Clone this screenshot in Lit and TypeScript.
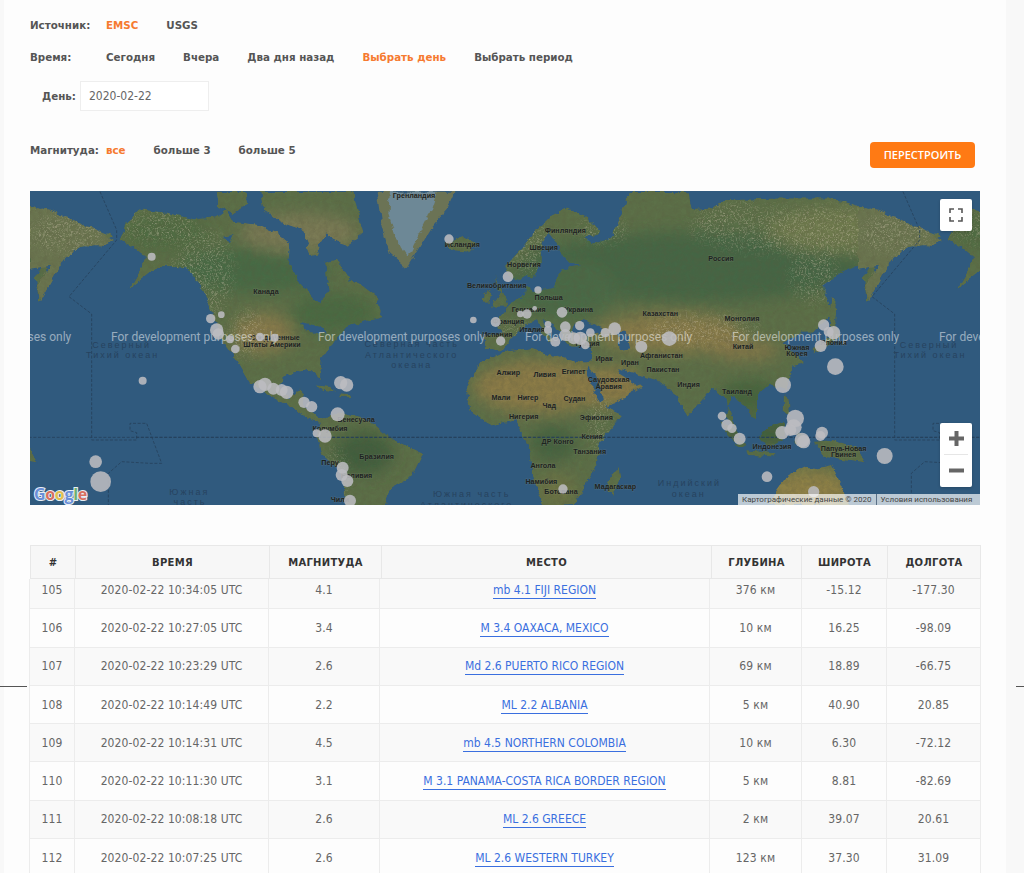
import { LitElement, css, html, svg } from 'lit'
import { customElement } from 'lit/decorators.js'

// all map data is written in "zoom units": 3 units = 1px, x measured from the page's left edge
const WRAP = 2484 // one world is 828px wide
const EAST = 1536 // eastern hemisphere points were measured with this x offset

const shift = (pts: string, dx: number) =>
  pts.trim().split(/\s+/).map((p) => {
    const [x, y] = p.split(',').map(Number)
    return `${x + dx},${y}`
  }).join(' ')

const LAND_WEST = [
  // north america
  '362,150 375,105 420,58 500,68 580,88 650,82 680,60 700,95 780,105 830,130 870,160 865,215 900,280 960,345 985,300 975,215 1010,205 1050,270 1085,285 1130,320 1148,382 1090,395 1040,410 1000,455 965,510 960,568 930,540 880,548 850,560 842,595 870,625 900,598 912,610 905,640 950,680 975,682 1020,668 1110,690 1170,745 1270,790 1235,860 1175,895 1155,945 1040,950 1025,850 962,790 950,735 965,700 935,690 880,655 800,612 745,575 705,505 660,440 640,380 610,300 560,232 470,232 385,300 440,205 395,170',
  // canadian arctic islands
  '650,5 740,5 745,40 700,70 655,50',
  '780,5 1060,5 1090,130 1040,170 980,130 940,190 910,120 850,100 790,60',
  '920,170 950,160 960,190 930,195',
  // iceland
  '1335,160 1390,140 1440,165 1400,185 1350,180',
  // cuba, haiti
  '940,585 990,590 1010,605 970,600',
  '1015,610 1055,612 1050,622 1020,622',
]

const LAND_EAST = [
  // eurasia
  '-81,475 -81,435 -26,430 -41,415 -41,385 -1,340 39,315 44,290 64,305 124,295 144,250 154,235 214,225 174,218 154,200 134,160 109,130 89,160 89,220 64,265 44,255 24,270 -11,260 -21,230 24,180 64,130 114,80 164,55 224,80 264,125 224,145 240,165 300,140 340,40 350,5 530,5 540,60 600,55 640,30 800,25 960,25 1100,70 1285,140 1240,165 1160,175 1095,210 1065,330 1055,265 1080,215 1000,240 930,290 965,370 905,425 870,425 815,460 880,520 840,530 825,600 770,585 735,615 735,690 690,640 660,615 640,680 672,720 640,625 600,595 530,680 480,600 430,570 330,538 390,590 285,650 245,610 222,520 240,510 240,470 174,470 159,450 124,405 89,390 124,455 109,455 74,390 39,405 -1,445 -26,480 -66,475',
  // britain, ireland
  '-51,255 -16,330 -11,350 -61,350 -36,310',
  '-86,310 -61,300 -66,335 -88,335',
  // japan
  '960,320 975,340 970,395 985,440 945,470 905,490 905,475 950,440 955,390',
  // africa
  '-138,590 -90,515 -66,505 -26,485 54,475 134,500 214,520 234,520 250,600 285,655 330,675 265,755 250,830 185,945 95,950 60,850 50,770 10,690 -60,710 -125,665',
  // madagascar
  '285,880 320,830 325,860 300,920',
  // sumatra, borneo, sulawesi, new guinea, java
  '625,690 665,715 700,770 680,770 640,725',
  '740,740 770,710 815,695 820,745 770,775',
  '860,725 880,740 870,775 850,760',
  '905,755 960,750 1040,775 1060,820 990,810 935,800',
  '705,780 790,790 790,800 710,795',
  // philippines
  '815,615 830,625 835,680 815,665',
  // australia
  '765,945 830,855 880,830 920,835 960,825 985,880 1010,945',
  // sakhalin
  '1060,280 1070,270 1075,330 1062,335',
]

// chukotka/kamchatka east of the wrap line, seen at the far left of the map
const LAND_FAR = [
  '90,60 130,55 200,80 290,120 340,150 300,170 240,165 190,210 120,335 110,280 150,230 90,240',
]

const WATER = [
  // black sea, caspian, red sea, persian gulf
  '184,400 214,390 274,415 264,430 214,440 179,425',
  '314,425 344,425 354,475 324,480',
  '222,530 240,540 280,630 265,640 235,580',
  '325,535 385,575 375,585 320,550',
]
const WATER_WEST = [
  // great lakes
  '900,395 960,410 985,430 950,430 915,420',
  '672,140 700,135 690,160',
]

// [x, y, r], western measurements first
const PINS_WEST = [
  [455, 200, 12], [428, 572, 12], [632, 386, 14], [664, 374, 10], [650, 420, 20], [655, 432, 17],
  [690, 448, 12], [706, 477, 13], [780, 441, 13], [824, 443, 12], [780, 590, 20], [795, 583, 20],
  [820, 596, 18], [845, 600, 18], [860, 607, 20], [1022, 578, 20], [1040, 585, 20], [912, 637, 17], [935, 650, 17],
  [1013, 673, 21], [950, 730, 12], [975, 738, 20], [1028, 833, 18], [1025, 855, 18], [1042, 873, 18],
  [1050, 932, 18], [287, 815, 19], [302, 875, 31], [1347, 147, 14], [1420, 390, 10], [1487, 396, 15],
  [1502, 453, 14], [1524, 260, 16],
]
const PINS_EAST = [
  [78, 300, 11], [150, 367, 16], [45, 372, 14], [25, 372, 10], [68, 355, 7], [108, 403, 10], [108, 420, 12],
  [160, 410, 16], [203, 407, 14], [235, 428, 13], [280, 428, 14], [308, 416, 19], [130, 455, 15], [160, 435, 18],
  [185, 445, 18], [205, 445, 20], [220, 465, 13], [388, 470, 18], [472, 446, 22], [935, 405, 17], [965, 428, 20],
  [950, 425, 15], [926, 468, 18], [970, 530, 25], [813, 585, 24], [850, 685, 26], [845, 712, 24], [810, 728, 20],
  [835, 720, 18], [870, 750, 22], [875, 755, 20], [930, 728, 18], [925, 738, 15], [630, 678, 13], [645, 705, 17],
  [660, 715, 14], [683, 746, 18], [765, 860, 16], [1118, 798, 24], [905, 905, 17], [153, 897, 14],
]

const LABELS_WEST: [string, number, number][] = [
  ['Гренландия', 1242, 25], ['Исландия', 1387, 172], ['Канада', 798, 311], ['Соединенные', 825, 449],
  ['Штаты Америки', 816, 470], ['Великобритания', 1490, 294], ['Венесуэла', 1068, 696], ['Колумбия', 990, 724],
  ['Бразилия', 1130, 807], ['Перу', 990, 825], ['Боливия', 1070, 864], ['Чили', 1020, 937], ['Алжир', 1525, 554],
  ['Мали', 1503, 630], ['Испания', 1492, 440], ['Франция', 1525, 401],
]
const LABELS_EAST: [string, number, number][] = [
  ['Финляндия', 160, 129], ['Швеция', 95, 179], ['Норвегия', 36, 231], ['Польша', 110, 330], ['Германия', 50, 367],
  ['Украина', 200, 365], ['Италия', 60, 425], ['Казахстан', 445, 379], ['Монголия', 690, 393], ['Россия', 627, 214],
  ['Китай', 693, 478], ['Южная', 855, 479], ['Корея', 855, 498], ['Япония', 965, 465], ['Турция', 225, 467],
  ['Ирак', 276, 514], ['Иран', 354, 526], ['Афганистан', 448, 504], ['Пакистан', 453, 547], ['Индия', 530, 592],
  ['Таиланд', 675, 613], ['Ливия', 98, 561], ['Египет', 185, 552], ['Саудовская', 290, 575], ['Аравия', 290, 597],
  ['Нигер', 48, 629], ['Судан', 187, 634], ['Чад', 112, 655], ['Нигерия', 35, 686], ['Эфиопия', 253, 691],
  ['Кения', 240, 748], ['ДР Конго', 137, 762], ['Танзания', 233, 793], ['Ангола', 93, 835], ['Намибия', 88, 882],
  ['Ботсвана', 147, 911], ['Мадагаскар', 310, 896], ['Индонезия', 780, 778], ['Папуа-Новая', 995, 782], ['Гвинея', 995, 802],
]
const OCEANS: [string, number, number][] = [
  ['Северный', 365, 474], ['Тихий океан', 368, 504],
  ['Северная часть', 1235, 472], ['Атлантического', 1235, 504], ['океана', 1235, 535],
  ['Южная', 568, 914], ['часть', 570, 944], ['Южная часть', 1415, 922], ['Атлантического', 1400, 954],
  ['Индийский', 2068, 889], ['океан', 2066, 920],
]

// textured relief, [cx, cy, rx, ry]
const RELIEF = [
  [610, 250, 90, 130], [480, 110, 110, 50], [740, 430, 50, 70], [1010, 860, 30, 90],
  [2400, 120, 330, 70], [2200, 100, 120, 60], [2110, 420, 170, 45], [1590, 170, 60, 80],
  [2640, 160, 130, 50], [200, 130, 110, 60], [1810, 120, 70, 40], [2440, 250, 70, 90],
  [1550, 420, 60, 20], [1800, 700, 30, 90],
]

const polys = (list: string[], dx: number, fill: string) =>
  list.map((p) => svg`<polygon points=${shift(p, dx)} fill=${fill}></polygon>`)

const labelRun = (list: [string, number, number][], dx: number) =>
  list.map(([t, x, y]) => svg`<text class="country" x=${x + dx} y=${y}>${t}</text>`)

const dateLine = svg`
  <polyline class="border" points="300,5 350,120 350,150 207,320 275,372 275,750 410,750 410,728 390,722 390,700 440,700 485,820 450,820 365,815 325,850 325,945"></polyline>
  <line class="border" x1="-2000" y1="742" x2="3200" y2="742"></line>
`

const landShapes = svg`
  ${polys(LAND_WEST, 0, '#5c7048')}
  ${polys(LAND_EAST, EAST, '#5c7048')}
  ${polys(LAND_FAR, 0, '#6b7650')}
`

const biomes = svg`
  <g filter="url(#soft)">
    <!-- boreal belts -->
    <ellipse cx="760" cy="240" rx="230" ry="70" fill="#476a45"></ellipse>
    <ellipse cx="500" cy="130" rx="130" ry="55" fill="#4f6c42"></ellipse>
    <ellipse cx="2080" cy="230" rx="520" ry="105" fill="#456644"></ellipse>
    <ellipse cx="1680" cy="300" rx="170" ry="90" fill="#486a46"></ellipse>
    <ellipse cx="2560" cy="120" rx="260" ry="70" fill="#6e7a4e"></ellipse>
    <ellipse cx="1000" cy="370" rx="130" ry="60" fill="#4a6b42"></ellipse>
    <!-- tundra -->
    <ellipse cx="900" cy="130" rx="180" ry="60" fill="#7a7a55"></ellipse>
    <!-- deserts -->
    <ellipse cx="790" cy="430" rx="90" ry="60" fill="#897b4c"></ellipse>
    <ellipse cx="1620" cy="590" rx="200" ry="80" fill="#8c7c46"></ellipse>
    <ellipse cx="1830" cy="590" rx="100" ry="60" fill="#8c7c46"></ellipse>
    <ellipse cx="2010" cy="430" rx="220" ry="60" fill="#897b48"></ellipse>
    <ellipse cx="2230" cy="480" rx="110" ry="30" fill="#85784a"></ellipse>
    <ellipse cx="2430" cy="905" rx="130" ry="70" fill="#8f8146"></ellipse>
    <!-- tropics -->
    <ellipse cx="1090" cy="790" rx="90" ry="65" fill="#3f5f3e"></ellipse>
    <ellipse cx="1660" cy="760" rx="70" ry="55" fill="#44643f"></ellipse>
    <ellipse cx="2250" cy="620" rx="90" ry="50" fill="#45653e"></ellipse>
    <ellipse cx="2310" cy="730" rx="150" ry="40" fill="#3f5f3e"></ellipse>
    <ellipse cx="1670" cy="900" rx="60" ry="50" fill="#6d7445"></ellipse>
  </g>
`

const GREEN_OUT = '1130,5 1365,5 1340,60 1295,110 1220,235 1170,190 1145,110'
const GREEN_ICE = '1170,5 1310,5 1285,80 1225,200 1190,150 1165,70'

const world = svg`
  <g filter="url(#coast)">
    <g clip-path="url(#land)">
      ${landShapes}
      ${biomes}
      <rect x="60" y="0" width="2900" height="945" filter="url(#grain)" opacity=".3"></rect>
      <g filter="url(#rough)" opacity=".42">
        ${RELIEF.map(([cx, cy, rx, ry]) => svg`<ellipse cx=${cx} cy=${cy} rx=${rx} ry=${ry}></ellipse>`)}
      </g>
    </g>
    <polygon points=${GREEN_OUT} fill="#6b7355"></polygon>
    <polygon points=${GREEN_ICE} fill="#6d8896"></polygon>
    ${polys(WATER, EAST, '#305a7e')}
    ${polys(WATER_WEST, 0, '#305a7e')}
  </g>
`

const FS_ICON = svg`<path d="M1 5V1h4M9 1h4v4M13 9v4H9M5 13H1V9" fill="none" stroke="#555" stroke-width="1.6"></path>`

@customElement('quake-map')
export class QuakeMap extends LitElement {
  render() {
    const devX = [-96, 111, 318, 525, 732, 939]
    return html`
      <svg class="canvas" viewBox="90 3 2850 942" width="950" height="314" xmlns="http://www.w3.org/2000/svg">
        <defs>
          <clipPath id="land">
            ${landShapes}
          </clipPath>
          <filter id="soft" x="-30%" y="-30%" width="160%" height="160%"><feGaussianBlur stdDeviation="22"></feGaussianBlur></filter>
          <filter id="grain" x="0" y="0" width="100%" height="100%">
            <feTurbulence type="fractalNoise" baseFrequency=".07" numOctaves="4" seed="4"></feTurbulence>
            <feColorMatrix values="0 0 0 0 .1  0 0 0 0 .1  0 0 0 0 .05  1.8 0 0 0 -.5"></feColorMatrix>
          </filter>
          <filter id="rough" x="-10%" y="-10%" width="120%" height="120%">
            <feGaussianBlur in="SourceGraphic" stdDeviation="16" result="b"></feGaussianBlur>
            <feTurbulence type="fractalNoise" baseFrequency=".2" numOctaves="2" seed="9" result="n"></feTurbulence>
            <feColorMatrix in="n" values="0 0 0 0 .62  0 0 0 0 .56  0 0 0 0 .42  3.2 0 0 0 -1.55" result="sp"></feColorMatrix>
            <feComposite in="sp" in2="b" operator="in"></feComposite>
          </filter>
          <filter id="coast" x="-2%" y="-2%" width="104%" height="104%" color-interpolation-filters="sRGB">
            <feTurbulence type="fractalNoise" baseFrequency=".045" numOctaves="3" seed="2" result="t"></feTurbulence>
            <feDisplacementMap in="SourceGraphic" in2="t" scale="18" xChannelSelector="R" yChannelSelector="G"></feDisplacementMap>
          </filter>
        </defs>
        <rect x="90" y="3" width="2850" height="942" fill="#305a7e"></rect>
        <g transform="translate(${-WRAP},0)">${world}</g>
        ${world}
        <g transform="translate(${WRAP},0)">${world}</g>
        ${dateLine}
        <g transform="translate(${WRAP - 75},0)">${dateLine}</g>
        ${OCEANS.map(([t, x, y]) => svg`<text class="ocean" x=${x} y=${y}>${t}</text>`)}
        <g transform="translate(${WRAP - 62},0)">
          <text class="ocean" x="365" y="474">Северный</text>
          <text class="ocean" x="368" y="504">Тихий океан</text>
        </g>
        ${labelRun(LABELS_WEST, 0)}
        ${labelRun(LABELS_EAST, EAST)}
        ${devX.map((x) => svg`<text class="dev" x=${x * 3} y="453">For development purposes only</text>`)}
        <g class="pins">
          ${PINS_WEST.map(([x, y, r]) => svg`<circle cx=${x} cy=${y} r=${r}></circle>`)}
          ${PINS_EAST.map(([x, y, r]) => svg`<circle cx=${x + EAST} cy=${y} r=${r}></circle>`)}
        </g>
        <text class="google" x="102" y="930" stroke="#e8eef5" stroke-width="6" paint-order="stroke"><tspan fill="#6a8fd8">G</tspan><tspan fill="#d9705f">o</tspan><tspan fill="#e2bf4e">o</tspan><tspan fill="#6a8fd8">g</tspan><tspan fill="#6cb070">l</tspan><tspan fill="#d9705f">e</tspan></text>
      </svg>

      <button class="ctl fullscreen" aria-label="fullscreen">
        <svg width="14" height="14" viewBox="0 0 14 14">${FS_ICON}</svg>
      </button>
      <div class="ctl zoom">
        <span class="zbtn"><svg width="15" height="15" viewBox="0 0 15 15"><path d="M0 7.5h15M7.5 0v15" stroke="#666" stroke-width="4"></path></svg></span>
        <i></i>
        <span class="zbtn"><svg width="15" height="15" viewBox="0 0 15 15"><path d="M0 7.5h15" stroke="#666" stroke-width="4"></path></svg></span>
      </div>
      <div class="attr"><span>Картографические данные © 2020</span><span>Условия использования</span></div>
    `
  }

  static styles = css`
    :host {
      display: block;
      position: relative;
      width: 950px;
      height: 314px;
      overflow: hidden;
      background: #305a7e;
    }
    .canvas {
      display: block;
    }
    .border {
      fill: none;
      stroke: #26405a;
      stroke-width: 2.4;
      stroke-dasharray: 9 5;
    }
    text {
      font-family: 'Liberation Sans', Arial, sans-serif;
    }
    .country {
      font-size: 21.5px;
      font-weight: 700;
      fill: #1d2320;
      text-anchor: middle;
      stroke: rgba(150, 150, 140, 0.25);
      stroke-width: 3px;
      paint-order: stroke;
    }
    .ocean {
      font-size: 27px;
      letter-spacing: 6px;
      fill: #27435f;
      text-anchor: middle;
    }
    .dev {
      font-family: Roboto, sans-serif;
      font-size: 36px;
      fill: rgba(255, 255, 255, 0.5);
    }
    .pins circle {
      fill: #bcbcc0;
      fill-opacity: 0.88;
    }
    .google {
      font-family: 'Open Sans', sans-serif;
      font-size: 48px;
      font-weight: 700;
      letter-spacing: -1px;
    }
    .ctl {
      position: absolute;
      right: 8px;
      background: #fff;
      border: 0;
      padding: 0;
      border-radius: 2px;
      box-shadow: 0 1px 3px rgba(0, 0, 0, 0.2);
    }
    .fullscreen {
      top: 8px;
      width: 32px;
      height: 32px;
      display: flex;
      align-items: center;
      justify-content: center;
    }
    .zoom {
      top: 232px;
      width: 32px;
      height: 64px;
      display: flex;
      flex-direction: column;
    }
    .zbtn {
      height: 31px;
      display: flex;
      align-items: center;
      justify-content: center;
    }
    .zoom i {
      height: 1px;
      margin: 0 4px;
      background: #e6e6e6;
    }
    .attr {
      position: absolute;
      right: 0;
      bottom: 0;
      height: 11px;
      width: 242px;
      display: flex;
      background: rgba(255, 255, 255, 0.68);
      font: 8px/11px Roboto, 'Liberation Sans', sans-serif;
      color: #444;
    }
    .attr span {
      padding: 0 4px;
      white-space: nowrap;
    }
    .attr span + span {
      border-left: 1px solid #5a7087;
    }
  `
}

type Quake = [number, string, string, string, string, string, string]

const QUAKES: Quake[] = [
  [105, '10:34:05', '4.1', 'mb 4.1 FIJI REGION', '376', '-15.12', '-177.30'],
  [106, '10:27:05', '3.4', 'M 3.4 OAXACA, MEXICO', '10', '16.25', '-98.09'],
  [107, '10:23:29', '2.6', 'Md 2.6 PUERTO RICO REGION', '69', '18.89', '-66.75'],
  [108, '10:14:49', '2.2', 'ML 2.2 ALBANIA', '5', '40.90', '20.85'],
  [109, '10:14:31', '4.5', 'mb 4.5 NORTHERN COLOMBIA', '10', '6.30', '-72.12'],
  [110, '10:11:30', '3.1', 'M 3.1 PANAMA-COSTA RICA BORDER REGION', '5', '8.81', '-82.69'],
  [111, '10:08:18', '2.6', 'ML 2.6 GREECE', '2', '39.07', '20.61'],
  [112, '10:07:25', '2.6', 'ML 2.6 WESTERN TURKEY', '123', '37.30', '31.09'],
]

@customElement('app-root')
export class AppRoot extends LitElement {
  render() {
    return html`
      <div class="page">
        <div class="filter first">
          <span class="label">Источник:</span>
          <a class="on">EMSC</a>
          <a>USGS</a>
        </div>
        <div class="filter second">
          <span class="label">Время:</span>
          <a>Сегодня</a>
          <a>Вчера</a>
          <a>Два дня назад</a>
          <a class="on">Выбрать день</a>
          <a>Выбрать период</a>
        </div>
        <div class="day">
          <span class="day-label">День:</span>
          <div class="input">2020-02-22</div>
        </div>
        <div class="bottom-filter">
          <div class="filter">
            <span class="label">Магнитуда:</span>
            <a class="on">все</a>
            <a>больше 3</a>
            <a>больше 5</a>
          </div>
          <button class="rebuild">ПЕРЕСТРОИТЬ</button>
        </div>
        <quake-map></quake-map>
        <table class="head">
          <colgroup><col class="c1" /><col class="c2" /><col class="c3" /><col class="c4" /><col class="c5" /><col class="c6" /><col class="c7" /></colgroup>
          <tr><th>#</th><th>ВРЕМЯ</th><th>МАГНИТУДА</th><th>МЕСТО</th><th>ГЛУБИНА</th><th>ШИРОТА</th><th>ДОЛГОТА</th></tr>
        </table>
        <div class="scroller">
          <table class="rows">
            <colgroup><col class="b1" /><col class="b2" /><col class="b3" /><col class="b4" /><col class="b5" /><col class="b6" /><col class="b7" /></colgroup>
            ${QUAKES.map((q) => html`
              <tr>
                <td>${q[0]}</td>
                <td>2020-02-22 ${q[1]} UTC</td>
                <td>${q[2]}</td>
                <td><a class="place">${q[3]}</a></td>
                <td>${q[4]} км</td>
                <td>${q[5]}</td>
                <td>${q[6]}</td>
              </tr>
            `)}
          </table>
        </div>
      </div>
    `
  }

  static styles = css`
    :host {
      display: block;
      position: relative;
      width: 1024px;
      height: 873px;
      overflow: hidden;
      background: #f8f8f8;
      font-family: 'DejaVu Sans', Verdana, sans-serif;
      color: #555;
    }
    /* the two stray rules at the sides of the table */
    :host::before,
    :host::after {
      content: '';
      position: absolute;
      top: 686px;
      height: 1px;
      background: #555;
    }
    :host::before {
      left: 0;
      width: 27px;
    }
    :host::after {
      right: 0;
      width: 8px;
    }
    .page {
      box-sizing: border-box;
      margin-left: 4px;
      width: 1002px;
      height: 873px;
      padding: 18px 0 0 26px;
      background: #fdfdfd;
    }
    .filter {
      display: flex;
      height: 14px;
      align-items: center;
      font-size: 10.3px;
      font-weight: 700;
      line-height: 14px;
    }
    .second {
      margin-top: 18px;
    }
    .label {
      width: 76px;
      flex: none;
    }
    .filter a {
      margin-right: 28px;
      white-space: nowrap;
    }
    .filter a.on {
      color: #f67a30;
    }
    .day {
      display: flex;
      align-items: center;
      margin: 17px 0 0 12px;
      font-size: 10.3px;
      font-weight: 700;
    }
    .day-label {
      width: 38px;
    }
    .input {
      box-sizing: border-box;
      width: 129px;
      height: 30px;
      padding-left: 8px;
      border: 1px solid #eee;
      background: #fff;
      font-family: 'DejaVu Sans Condensed', 'DejaVu Sans', sans-serif;
      font-size: 12px;
      font-weight: 400;
      line-height: 28px;
      color: #666;
    }
    .bottom-filter {
      display: flex;
      justify-content: space-between;
      align-items: flex-start;
      width: 945px;
      height: 49px;
      margin-top: 31px;
    }
    .bottom-filter .filter {
      margin-top: 1px;
    }
    .rebuild {
      width: 105px;
      height: 26px;
      border: 0;
      border-radius: 4px;
      padding: 0;
      background: #ff7a14;
      color: #fff;
      font: 600 11px/26px 'Open Sans', sans-serif;
    }
    quake-map {
      margin-bottom: 40px;
    }
    table {
      table-layout: fixed;
      border-collapse: collapse;
    }
    .head {
      width: 950px;
    }
    .c1 { width: 45px; }
    .c2 { width: 194px; }
    .c3 { width: 112px; }
    .c4 { width: 330px; }
    .c5 { width: 90px; }
    .c6 { width: 86px; }
    .c7 { width: 93px; }
    th {
      height: 32px;
      padding: 0;
      border: 1px solid #e8e8e8;
      background: #f7f7f7;
      color: #333;
      font-size: 10px;
      font-weight: 700;
      letter-spacing: 0.3px;
    }
    .scroller {
      margin-left: -1px;
      height: 300px;
      overflow: hidden;
    }
    .rows {
      width: 951px;
      margin-top: -9px;
    }
    .b1 { width: 45px; }
    .b2 { width: 194px; }
    .b3 { width: 111px; }
    .b4 { width: 330px; }
    .b5 { width: 92px; }
    .b6 { width: 85px; }
    .b7 { width: 94px; }
    .rows tr {
      height: 38.3px;
    }
    .rows tr:nth-child(even) td {
      background: #f9f9f9;
    }
    td {
      padding: 0;
      border: 1px solid #ececec;
      background: #fdfdfd;
      text-align: center;
      font-family: 'DejaVu Sans Condensed', 'DejaVu Sans', sans-serif;
      font-size: 12px;
      letter-spacing: 0.1px;
      color: #666;
    }
    .place {
      letter-spacing: 0;
      color: #3a6fdf;
      border-bottom: 1px solid #3a6fdf;
      padding-bottom: 1px;
    }
  `
}

declare global {
  interface HTMLElementTagNameMap {
    'app-root': AppRoot
    'quake-map': QuakeMap
  }
}
